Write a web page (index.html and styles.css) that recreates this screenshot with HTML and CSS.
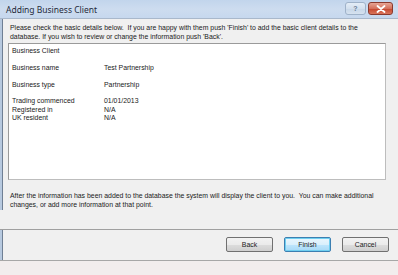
FILE: index.html
```html
<!DOCTYPE html>
<html>
<head>
<meta charset="utf-8">
<link rel="stylesheet" href="styles.css">
</head>
<body>
<div class="window">
  <div class="titlebar">
    <span class="title">Adding Business Client</span>
    <div class="controls">
      <div class="btn-help">?</div>
      <div class="btn-close">
        <svg width="10" height="8" viewBox="0 0 10 8"><path d="M1.5 1 L8.5 7 M8.5 1 L1.5 7" stroke="#fff" stroke-width="1.8" stroke-linecap="round"/></svg>
      </div>
    </div>
  </div>
  <div class="frame">
    <div class="edge"></div>
    <div class="content">
      <p class="intro">Please check the basic details below.&nbsp; If you are happy with them push 'Finish' to add the basic client details to the database. If you wish to review or change the information push 'Back'.</p>
      <div class="box">
        <div class="row">Business Client</div>
        <div class="row blank"></div>
        <div class="row"><span class="lbl">Business name</span><span>Test Partnership</span></div>
        <div class="row blank"></div>
        <div class="row"><span class="lbl">Business type</span><span>Partnership</span></div>
        <div class="row blank"></div>
        <div class="row"><span class="lbl">Trading commenced</span><span>01/01/2013</span></div>
        <div class="row"><span class="lbl">Registered in</span><span>N/A</span></div>
        <div class="row"><span class="lbl">UK resident</span><span>N/A</span></div>
      </div>
      <p class="after">After the information has been added to the database the system will display the client to you.&nbsp; You can make additional changes, or add more information at that point.</p>
    </div>
  </div>
  <div class="buttons">
    <div class="edge"></div>
    <div class="btnrow">
      <button class="btn">Back</button>
      <button class="btn default">Finish</button>
      <button class="btn">Cancel</button>
    </div>
  </div>
  <div class="bottom"></div>
</div>
</body>
</html>
```
FILE: styles.css
```css
html, body {
  margin: 0;
  padding: 0;
  width: 398px;
  height: 275px;
  overflow: hidden;
  background: #f0f0f0;
  font-family: "Liberation Sans", Arial, sans-serif;
  color: #1a1a1a;
}
.window {
  display: flex;
  flex-direction: column;
  height: 275px;
}
.titlebar {
  height: 19px;
  flex: none;
  display: flex;
  align-items: center;
  justify-content: space-between;
  background: linear-gradient(to bottom, #c2d5ec 0%, #cddcef 50%, #c6d8ee 100%);
  border-bottom: 1px solid #a9b8cb;
  box-sizing: border-box;
}
.title {
  font-family: "Noto Sans", "Open Sans", sans-serif;
  font-size: 8.5px;
  color: #1e2a3a;
  padding-left: 6px;
  padding-top: 1px;
}
.controls {
  display: flex;
  align-items: center;
  gap: 2px;
  padding-right: 5px;
  padding-bottom: 1px;
}
.btn-help {
  width: 21px;
  height: 13px;
  box-sizing: border-box;
  border: 1px solid #9fb2c9;
  border-radius: 3px;
  background: linear-gradient(to bottom, #e4edf7 0%, #d3e0ee 50%, #c6d6e8 51%, #d6e2ef 100%);
  font-size: 7px;
  font-weight: bold;
  color: #6a7d96;
  display: flex;
  align-items: center;
  justify-content: center;
}
.btn-close {
  width: 25px;
  height: 13px;
  box-sizing: border-box;
  border: 1px solid #8a3a2e;
  border-radius: 3px;
  background: linear-gradient(to bottom, #e7a595 0%, #d4705c 50%, #c4442c 51%, #d9755b 100%);
  display: flex;
  align-items: center;
  justify-content: center;
}
.frame {
  display: flex;
  flex: none;
}
.edge {
  width: 2px;
  flex: none;
  background: #b7c9df;
  border-right: 1px solid #6f7f94;
}
.content {
  flex: 1;
  padding: 3px 12px 0 5px;
  font-size: 6.9px;
}
.intro {
  margin: 0 0 0 2px;
  line-height: 9.2px;
  padding-top: 1px;
}
.box {
  margin-top: 2px;
  height: 137px;
  box-sizing: border-box;
  background: #fff;
  border: 1px solid #9a9a9a;
  border-right-color: #bdbdbd;
  border-bottom-color: #bdbdbd;
  padding: 3px 3px 1px;
}
.row {
  display: flex;
  height: 8.35px;
  line-height: 8.35px;
  white-space: nowrap;
}
.lbl {
  width: 92px;
}
.after {
  margin: 12px 0 0 2px;
  line-height: 8.7px;
}
.buttons {
  display: flex;
  flex: none;
  height: 30px;
  margin-top: auto;
  border-top: 1px solid #a0a0a0;
}
.btnrow {
  flex: 1;
  display: flex;
  justify-content: flex-end;
  gap: 11px;
  padding: 7px 9px 0 0;
}
.btn {
  width: 47px;
  height: 15px;
  box-sizing: border-box;
  border: 1px solid #707070;
  border-radius: 2px;
  background: linear-gradient(to bottom, #f2f2f2 0%, #ebebeb 50%, #dddddd 51%, #cfcfcf 100%);
  font-family: "Liberation Sans", Arial, sans-serif;
  font-size: 6.9px;
  color: #1a1a1a;
  padding: 0;
}
.btn.default {
  border-color: #3c7fb1;
  background: linear-gradient(to bottom, #eaf6fd 0%, #d9f0fc 50%, #bee6fd 51%, #a7d9f5 100%);
  box-shadow: inset 0 0 0 1px #6fcff0;
}
.bottom {
  height: 14px;
  flex: none;
  border-top: 1px solid #a7a7a7;
  background: #f2eded;
}
```
